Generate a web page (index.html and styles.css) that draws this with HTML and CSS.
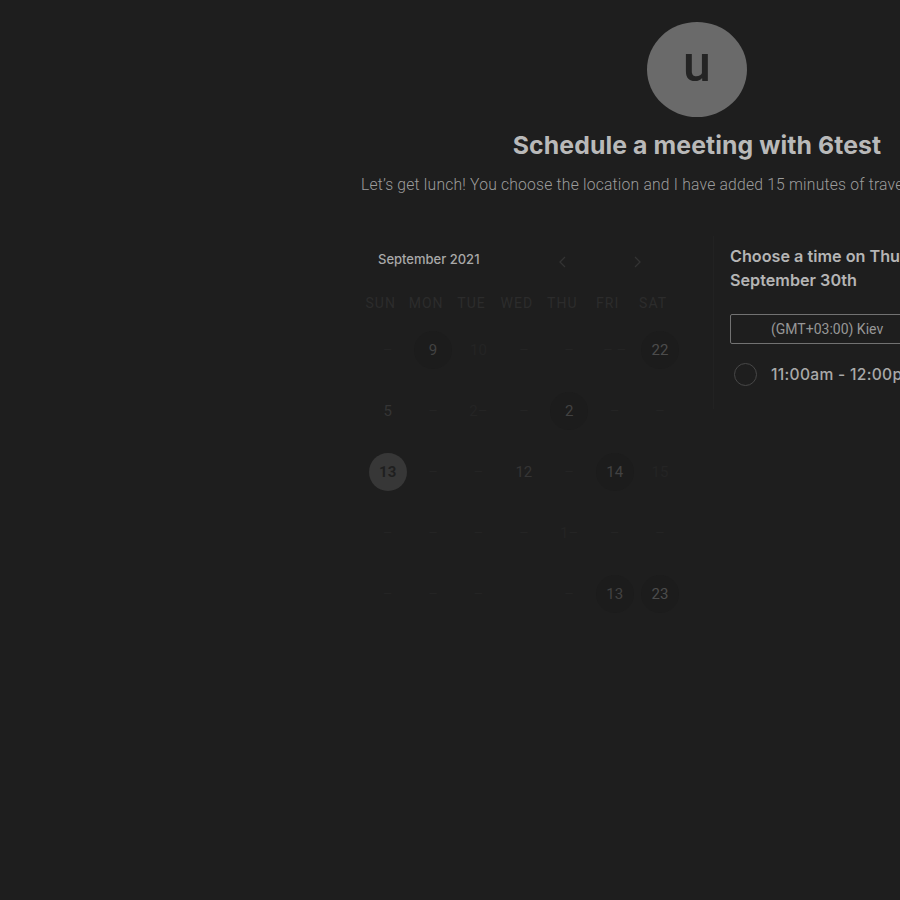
FILE: index.html
```html
<!DOCTYPE html>
<html>
<head>
<meta charset="utf-8">
<link rel="stylesheet" href="styles.css">
</head>
<body>
<div class="page">
  <div class="avatar"><span>u</span></div>
  <h1 class="title">Schedule a meeting with 6test</h1>
  <p class="subtitle">Let’s get lunch! You choose the location and I have added 15 minutes of travel time.</p>
  <div class="content">
    <div class="calendar">
      <div class="cal-head">
        <span class="month">September 2021</span>
        <div class="arrows">
          <svg width="10" height="14" viewBox="0 0 10 14"><path d="M7 2 L2 7 L7 12" fill="none" stroke="currentColor" stroke-width="1.3"/></svg>
          <svg width="10" height="14" viewBox="0 0 10 14"><path d="M3 2 L8 7 L3 12" fill="none" stroke="currentColor" stroke-width="1.3"/></svg>
        </div>
      </div>
      <div class="grid">
        <div class="dow">SUN</div><div class="dow">MON</div><div class="dow">TUE</div><div class="dow">WED</div><div class="dow">THU</div><div class="dow">FRI</div><div class="dow">SAT</div>

        <div class="day ghost">–</div><div class="day dark">9</div><div class="day ghost">10</div><div class="day ghost">–</div><div class="day ghost">–</div><div class="day ghost">– –</div><div class="day dark lit">22</div>

        <div class="day faint">5</div><div class="day ghost">–</div><div class="day ghost">2–</div><div class="day ghost">–</div><div class="day dark">2</div><div class="day ghost">–</div><div class="day ghost">–</div>

        <div class="day sel">13</div><div class="day ghost">–</div><div class="day ghost">–</div><div class="day faint">12</div><div class="day ghost">–</div><div class="day dark">14</div><div class="day ghost">15</div>

        <div class="day ghost">–</div><div class="day ghost">–</div><div class="day ghost">–</div><div class="day ghost">–</div><div class="day ghost">1–</div><div class="day ghost">–</div><div class="day ghost">–</div>

        <div class="day ghost">–</div><div class="day ghost">–</div><div class="day ghost">–</div><div class="day ghost"></div><div class="day ghost">–</div><div class="day dark">13</div><div class="day dark lit">23</div>
      </div>
    </div>
    <div class="times">
      <h2 class="choose">Choose a time on Thursday<br>September 30th</h2>
      <div class="tz">(GMT+03:00) Kiev</div>
      <div class="slot"><span class="radio"></span><span class="slot-text">11:00am - 12:00pm</span></div>
    </div>
  </div>
</div>
</body>
</html>
```
FILE: styles.css
```css
html, body {
  margin: 0;
  padding: 0;
  background: #1e1e1e;
  overflow: hidden;
}
body {
  width: 900px;
  height: 900px;
  font-family: Inter, "Noto Sans", sans-serif;
}
.page {
  width: 1394px;
  display: flex;
  flex-direction: column;
  align-items: center;
  padding-top: 22px;
}
.avatar {
  width: 100px;
  height: 95px;
  border-radius: 50%;
  background: #6a6a6a;
  display: flex;
  align-items: center;
  justify-content: center;
}
.avatar span {
  font-family: Roboto, sans-serif;
  font-size: 50px;
  font-weight: 500;
  color: #242424;
  line-height: 1;
  margin-top: -12px;
}
.title {
  margin: 13px 0 0;
  font-size: 24.8px;
  font-weight: 700;
  color: #b9b9b9;
  line-height: 30px;
  letter-spacing: 0.1px;
}
.subtitle {
  width: 672px;
  margin: 15px 0 0;
  font-family: Roboto, sans-serif;
  font-size: 15.7px;
  font-weight: 300;
  color: #9c9c9c;
  line-height: 20px;
  letter-spacing: 0.2px;
  white-space: nowrap;
}
.content {
  width: 664px;
  display: flex;
  margin-top: 41px;
}
.calendar {
  width: 320px;
}
.cal-head {
  display: flex;
  align-items: center;
  padding-left: 13px;
  height: 34px;
  padding-top: 6px;
}
.month {
  font-size: 13px;
  font-weight: 500;
  color: #a9a9a9;
  width: 180px;
}
.arrows {
  display: flex;
  gap: 64px;
  color: #333333;
  margin-top: 6px;
}
.grid {
  display: grid;
  grid-template-columns: repeat(7, 45.4px);
  grid-template-rows: 30px repeat(5, 61px);
  margin-top: 6px;
  align-items: center;
  justify-items: center;
}
.dow {
  font-family: Roboto, sans-serif;
  font-size: 14px;
  letter-spacing: 1px;
  color: #2c2c2c;
  margin-right: 14px;
  margin-top: 12px;
}
.day {
  width: 38px;
  height: 38px;
  border-radius: 50%;
  display: flex;
  align-items: center;
  justify-content: center;
  font-family: Roboto, sans-serif;
  font-size: 15px;
  color: #242424;
  margin-top: 14px;
}
.day.faint {
  color: #353535;
}
.day.dark {
  background: #1c1c1c;
  color: #424242;
}
.day.dark.lit {
  color: #4c4c4c;
}
.day.sel {
  background: #373737;
  color: #1f1f1f;
  font-weight: 700;
}
.times {
  flex: 1;
  align-self: flex-start;
  height: 165px;
  margin-left: 28px;
  padding-left: 16px;
  border-left: 1px solid #222;
  padding-top: 8px;
}
.choose {
  margin: 0;
  font-size: 16.2px;
  font-weight: 600;
  line-height: 24px;
  color: #b5b5b5;
}
.tz {
  margin-top: 22px;
  height: 28px;
  border: 1px solid #727272;
  border-radius: 2px;
  display: flex;
  align-items: center;
  padding-left: 40px;
  font-family: Roboto, sans-serif;
  font-size: 14px;
  color: #979797;
}
.slot {
  display: flex;
  align-items: center;
  margin-top: 19px;
  padding-left: 4px;
}
.radio {
  width: 21px;
  height: 21px;
  border: 1px solid #474747;
  border-radius: 50%;
}
.slot-text {
  margin-left: 14px;
  font-size: 15.6px;
  font-weight: 500;
  color: #a9a9a9;
  letter-spacing: 0.3px;
}
```
